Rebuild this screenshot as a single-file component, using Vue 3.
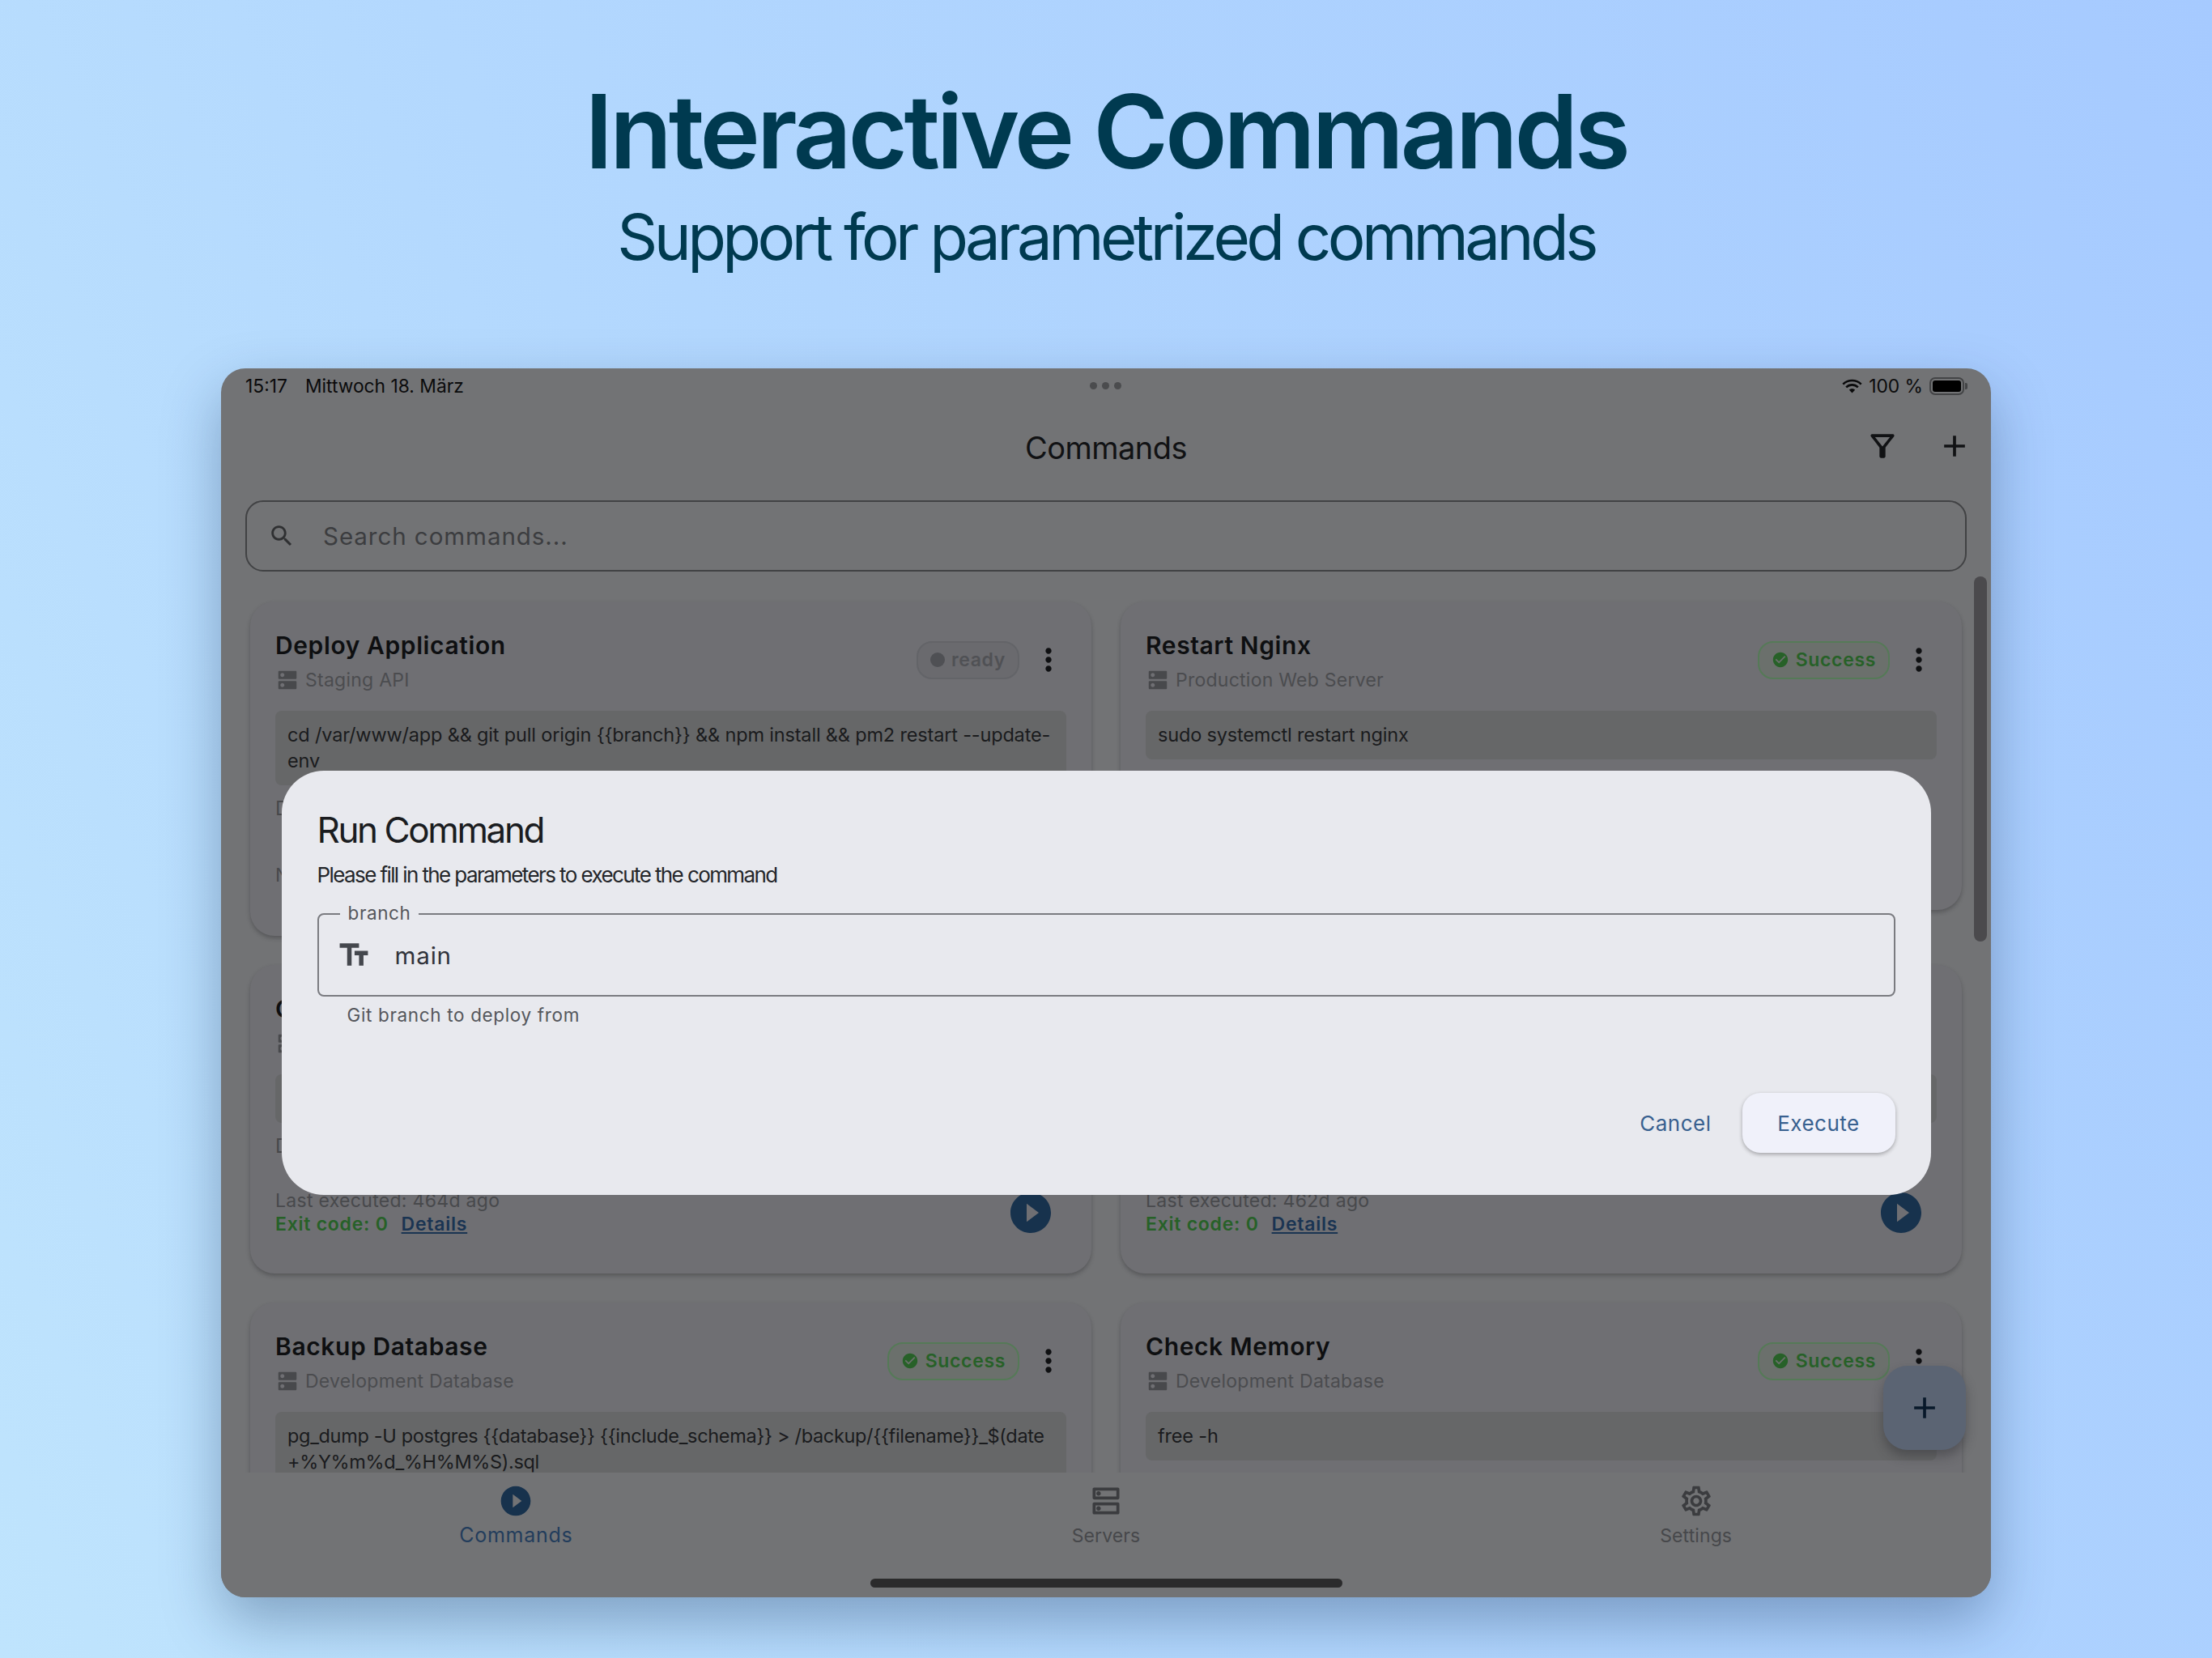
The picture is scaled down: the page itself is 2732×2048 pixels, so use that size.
<template>
  <div class="page">
    <header class="head">
      <h1>Interactive Commands</h1>
      <p>Support for parametrized commands</p>
    </header>

    <div class="device">
      <!-- status bar -->
      <div class="status">
        <div class="status-left"><span>15:17</span><span>Mittwoch 18. März</span></div>
        <div class="status-dots"><i></i><i></i><i></i></div>
        <div class="status-right">
          <svg width="25" height="18" viewBox="0 0 25 18" fill="none" stroke="#0b0b0c" stroke-width="2.6">
            <path d="M1.3 6.6a16 16 0 0 1 22.4 0" />
            <path d="M5.2 10.4a10.4 10.4 0 0 1 14.6 0" />
            <path d="M8.8 13.6a5.2 5.2 0 0 1 7.4 0L12.5 17.4z" fill="#0b0b0c" stroke="none" />
          </svg>
          <span>100 %</span>
          <div class="battery"><div></div></div>
        </div>
      </div>

      <!-- app bar -->
      <div class="appbar">
        <div class="appbar-title">Commands</div>
        <div class="appbar-actions">
          <svg class="ic44" viewBox="0 0 24 24" fill="#111214"><path :d="icons.filter" /></svg>
          <svg class="ic44" viewBox="0 0 24 24" fill="#111214"><path :d="icons.add" /></svg>
        </div>
      </div>

      <div class="search">
        <svg class="search-ic" viewBox="0 0 24 24" fill="#2f3032"><path :d="icons.search" /></svg>
        <span>Search commands...</span>
      </div>

      <main class="list">
        <div class="grid">
          <article v-for="c in cards" :key="c.title" class="card">
            <div class="card-top">
              <div class="card-names">
                <div class="card-title">{{ c.title }}</div>
                <div class="card-server">
                  <svg class="ic30" viewBox="0 0 24 24" fill="#48494c"><path :d="icons.dns" /></svg>
                  <span>{{ c.server }}</span>
                </div>
              </div>
              <div class="chip" :class="{ ok: c.ok }">
                <svg v-if="c.ok" class="ic22" viewBox="0 0 24 24" fill="#276128"><path :d="icons.check" /></svg>
                <i v-else class="chip-dot"></i>
                <span>{{ c.ok ? 'Success' : 'ready' }}</span>
              </div>
              <svg class="ic44 menu" viewBox="0 0 24 24" fill="#0f1012"><path :d="icons.more" /></svg>
            </div>
            <div class="code" :class="{ tight: c.tight }">{{ c.code }}</div>
            <div class="desc">{{ c.desc }}</div>
            <div class="foot">
              <div class="foot-text">
                <div v-if="c.last" class="last">Last executed: {{ c.last }} ago</div>
                <div v-else class="last">Never executed</div>
                <div v-if="c.last" class="exit">
                  <span>Exit code: 0</span><a>Details</a>
                </div>
              </div>
              <svg class="play" viewBox="0 0 24 24" fill="#17324d"><path :d="icons.play" /></svg>
            </div>
          </article>
        </div>
      </main>

      <nav class="nav">
        <div class="tab active">
          <svg class="ic44" viewBox="0 0 24 24" fill="#17324d"><path :d="icons.play" /></svg>
          <span>Commands</span>
        </div>
        <div class="tab">
          <svg class="ic44" viewBox="0 0 24 24" fill="#3b3c3f"><path :d="icons.dnsOutline" /></svg>
          <span>Servers</span>
        </div>
        <div class="tab">
          <svg class="ic44" viewBox="0 0 24 24" fill="#3b3c3f"><path :d="icons.settings" /></svg>
          <span>Settings</span>
        </div>
      </nav>
      <div class="home"></div>

      <div class="scrollbar"></div>
      <div class="fab">
        <svg class="ic44" viewBox="0 0 24 24" fill="#08182a"><path :d="icons.add" /></svg>
      </div>

      <!-- dialog -->
      <div class="overlay">
        <div class="dialog">
          <h2>Run Command</h2>
          <p class="dialog-sub">Please fill in the parameters to execute the command</p>
          <div class="field">
            <span class="field-label">branch</span>
            <svg class="ic44 field-ic" viewBox="0 0 24 24" fill="#44474d"><path :d="icons.text" /></svg>
            <span class="field-value">main</span>
          </div>
          <div class="helper">Git branch to deploy from</div>
          <div class="actions">
            <button class="btn-text">Cancel</button>
            <button class="btn-fill">Execute</button>
          </div>
        </div>
      </div>
    </div>
  </div>
</template>

<script setup>
const icons = {
  filter: 'M7 6h10l-5.01 6.3L7 6zm-2.75-.39C6.27 8.2 10 13 10 13v6c0 .55.45 1 1 1h2c.55 0 1-.45 1-1v-6s3.72-4.8 5.75-7.39c.51-.66.04-1.61-.79-1.61H5.04c-.83 0-1.3.95-.79 1.61z',
  add: 'M19 13h-6v6h-2v-6H5v-2h6V5h2v6h6v2z',
  search: 'M15.5 14h-.79l-.28-.27C15.41 12.59 16 11.11 16 9.5 16 5.91 13.09 3 9.5 3S3 5.91 3 9.5 5.91 16 9.5 16c1.61 0 3.09-.59 4.23-1.57l.27.28v.79l5 4.99L20.49 19l-4.99-5zm-6 0C7.01 14 5 11.99 5 9.5S7.01 5 9.5 5 14 7.01 14 9.5 11.99 14 9.5 14z',
  dns: 'M20 13H4c-.55 0-1 .45-1 1v6c0 .55.45 1 1 1h16c.55 0 1-.45 1-1v-6c0-.55-.45-1-1-1zM7 19c-1.1 0-2-.9-2-2s.9-2 2-2 2 .9 2 2-.9 2-2 2zM20 3H4c-.55 0-1 .45-1 1v6c0 .55.45 1 1 1h16c.55 0 1-.45 1-1V4c0-.55-.45-1-1-1zM7 9c-1.1 0-2-.9-2-2s.9-2 2-2 2 .9 2 2-.9 2-2 2z',
  dnsOutline: 'M19 15v4H5v-4h14m1-2H4c-.55 0-1 .45-1 1v6c0 .55.45 1 1 1h16c.55 0 1-.45 1-1v-6c0-.55-.45-1-1-1zM7 18.5c-.82 0-1.5-.67-1.5-1.5s.68-1.5 1.5-1.5 1.5.67 1.5 1.5-.67 1.5-1.5 1.5zM19 5v4H5V5h14m1-2H4c-.55 0-1 .45-1 1v6c0 .55.45 1 1 1h16c.55 0 1-.45 1-1V4c0-.55-.45-1-1-1zM7 8.5c-.82 0-1.5-.67-1.5-1.5S6.18 5.5 7 5.5s1.5.68 1.5 1.5S7.83 8.5 7 8.5z',
  settings: 'M19.43 12.98c.04-.32.07-.64.07-.98 0-.34-.03-.66-.07-.98l2.11-1.65c.19-.15.24-.42.12-.64l-2-3.46c-.09-.16-.26-.25-.44-.25-.06 0-.12.01-.17.03l-2.49 1c-.52-.4-1.08-.73-1.69-.98l-.38-2.65C14.46 2.18 14.25 2 14 2h-4c-.25 0-.46.18-.49.42l-.38 2.65c-.61.25-1.17.59-1.69.98l-2.49-1c-.06-.02-.12-.03-.18-.03-.17 0-.34.09-.43.25l-2 3.46c-.13.22-.07.49.12.64l2.11 1.65c-.04.32-.07.65-.07.98 0 .33.03.66.07.98l-2.11 1.65c-.19.15-.24.42-.12.64l2 3.46c.09.16.26.25.44.25.06 0 .12-.01.17-.03l2.49-1c.52.4 1.08.73 1.69.98l.38 2.65c.03.24.24.42.49.42h4c.25 0 .46-.18.49-.42l.38-2.65c.61-.25 1.17-.59 1.69-.98l2.49 1c.06.02.12.03.18.03.17 0 .34-.09.43-.25l2-3.46c.12-.22.07-.49-.12-.64l-2.11-1.65zm-1.98-1.71c.04.31.05.52.05.73 0 .21-.02.43-.05.73l-.14 1.13.89.7 1.08.84-.7 1.21-1.27-.51-1.04-.42-.9.68c-.43.32-.84.56-1.25.73l-1.06.43-.16 1.13-.2 1.35h-1.4l-.19-1.35-.16-1.13-1.06-.43c-.43-.18-.83-.41-1.23-.71l-.91-.7-1.06.43-1.27.51-.7-1.21 1.08-.84.89-.7-.14-1.13c-.03-.31-.05-.54-.05-.74s.02-.43.05-.73l.14-1.13-.89-.7-1.08-.84.7-1.21 1.27.51 1.04.42.9-.68c.43-.32.84-.56 1.25-.73l1.06-.43.16-1.13.2-1.35h1.39l.19 1.35.16 1.13 1.06.43c.43.18.83.41 1.23.71l.91.7 1.06-.43 1.27-.51.7 1.21-1.07.85-.89.7.14 1.13zM12 8c-2.21 0-4 1.79-4 4s1.79 4 4 4 4-1.79 4-4-1.79-4-4-4zm0 6c-1.1 0-2-.9-2-2s.9-2 2-2 2 .9 2 2-.9 2-2 2z',
  play: 'M12 2C6.48 2 2 6.48 2 12s4.48 10 10 10 10-4.48 10-10S17.52 2 12 2zm-2 14.5v-9l6 4.5-6 4.5z',
  check: 'M12 2C6.48 2 2 6.48 2 12s4.48 10 10 10 10-4.48 10-10S17.52 2 12 2zm-2 15l-5-5 1.41-1.41L10 14.17l7.59-7.59L19 8l-9 9z',
  more: 'M12 8c1.1 0 2-.9 2-2s-.9-2-2-2-2 .9-2 2 .9 2 2 2zm0 2c-1.1 0-2 .9-2 2s.9 2 2 2 2-.9 2-2-.9-2-2-2zm0 6c-1.1 0-2 .9-2 2s.9 2 2 2 2-.9 2-2-.9-2-2-2z',
  text: 'M2.5 4v3h5v12h3V7h5V4h-13zm19 5h-9v3h3v7h3v-7h3V9z'
}

const cards = [
  {
    title: 'Deploy Application',
    server: 'Staging API',
    ok: false,
    code: 'cd /var/www/app && git pull origin {{branch}} && npm install && pm2 restart --update-env',
    desc: 'Deploy latest version',
    last: ''
  },
  {
    title: 'Restart Nginx',
    server: 'Production Web Server',
    ok: true,
    code: 'sudo systemctl restart nginx',
    desc: 'Restart the web server',
    last: '465d'
  },
  {
    title: 'Check Disk Usage',
    server: 'Production Web Server',
    ok: true,
    code: 'df -h',
    desc: 'Disk usage overview',
    last: '464d'
  },
  {
    title: 'View Logs',
    server: 'Production Web Server',
    ok: true,
    code: 'tail -n 100 /var/log/nginx/error.log',
    desc: 'Display recent log lines',
    last: '462d'
  },
  {
    title: 'Backup Database',
    server: 'Development Database',
    ok: true,
    tight: true,
    code: 'pg_dump -U postgres {{database}} {{include_schema}} > /backup/{{filename}}_$(date +%Y%m%d_%H%M%S).sql',
    desc: 'Dump the database',
    last: '460d'
  },
  {
    title: 'Check Memory',
    server: 'Development Database',
    ok: true,
    code: 'free -h',
    desc: 'Show memory usage',
    last: '460d'
  }
]
</script>

<style scoped>
.page {
  width: 2732px;
  height: 2048px;
  overflow: hidden;
  background: linear-gradient(65deg, #bfe4fd 0%, #b3d8fe 40%, #a6caff 100%);
  font-family: Inter, "Noto Sans", sans-serif;
}

.head {
  text-align: center;
  color: #003a50;
  padding-top: 89px;
  height: 455px;
  box-sizing: border-box;
}
.head h1 {
  margin: 0;
  font-size: 126px;
  line-height: 146px;
  font-weight: 620;
  letter-spacing: -4.3px;
}
.head p {
  margin: 8px 0 0;
  font-size: 78px;
  line-height: 100px;
  font-weight: 400;
  letter-spacing: -4.6px;
}

.device {
  position: relative;
  width: 2186px;
  height: 1518px;
  margin-left: 273px;
  border-radius: 30px;
  overflow: hidden;
  background: #727375;
  display: flex;
  flex-direction: column;
  box-shadow: 0 30px 70px rgba(20, 50, 90, 0.35);
}

.status {
  height: 43px;
  flex: none;
  padding: 0 30px;
  display: flex;
  align-items: center;
  justify-content: space-between;
  font-size: 22.8px;
  color: #0b0b0c;
  position: relative;
}
.status-left {
  display: flex;
  gap: 22px;
}
.status-dots {
  position: absolute;
  left: 1073px;
  top: 17px;
  display: flex;
  gap: 6px;
}
.status-dots i {
  width: 9px;
  height: 9px;
  border-radius: 50%;
  background: #4b4c4e;
}
.status-right {
  display: flex;
  align-items: center;
  gap: 8px;
}
.battery {
  width: 43px;
  height: 22px;
  border: 2px solid #434446;
  border-radius: 7px;
  box-sizing: border-box;
  padding: 2px;
  position: relative;
  margin-right: 3px;
}
.battery div {
  height: 100%;
  background: #000;
  border-radius: 3px;
}
.battery::after {
  content: "";
  position: absolute;
  right: -6px;
  top: 5px;
  width: 3px;
  height: 8px;
  background: #434446;
  border-radius: 0 2px 2px 0;
}

.appbar {
  height: 120px;
  flex: none;
  position: relative;
  box-sizing: border-box;
  padding-bottom: 10px;
  display: flex;
  align-items: center;
  justify-content: center;
}
.appbar-title {
  font-size: 38px;
  color: #111214;
  letter-spacing: -0.5px;
}
.appbar-actions {
  position: absolute;
  right: 23px;
  top: 31px;
  display: flex;
  gap: 45px;
}

.ic44 {
  width: 44px;
  height: 44px;
  flex: none;
}
.ic30 {
  width: 30px;
  height: 30px;
  flex: none;
}
.ic22 {
  width: 22px;
  height: 22px;
  flex: none;
}

.search {
  flex: none;
  height: 88px;
  margin: 0 30px;
  box-sizing: border-box;
  border: 2px solid #414244;
  border-radius: 22px;
  display: flex;
  align-items: center;
  padding-left: 26px;
  font-size: 29.6px;
  color: #3c3d40;
  letter-spacing: 0.9px;
}
.search-ic {
  width: 34px;
  height: 34px;
  margin-right: 34px;
}

.list {
  flex: 1;
  min-height: 0;
  overflow: hidden;
  padding: 37px 34px 0 36px;
}
.grid {
  display: grid;
  grid-template-columns: 1039px 1039px;
  column-gap: 36px;
  row-gap: 36px;
  align-items: start;
}
.card {
  background: #6f6f73;
  border-radius: 30px;
  padding: 32px 31px 45px 31px;
  box-shadow: 0 3px 5px rgba(40, 40, 44, 0.35);
}
.card-top {
  display: flex;
  align-items: center;
}
.card-names {
  flex: 1;
  min-width: 0;
}
.card-title {
  font-size: 30px;
  line-height: 44px;
  font-weight: 600;
  color: #0e0f11;
  letter-spacing: 0.6px;
}
.card-server {
  display: flex;
  align-items: center;
  gap: 7px;
  margin-top: 6px;
  height: 30px;
  font-size: 23px;
  color: #4b4c4f;
  letter-spacing: 0.25px;
}
.chip {
  height: 47px;
  box-sizing: border-box;
  border: 2px solid #636468;
  background: #6a6a6e;
  border-radius: 19px;
  padding: 0 15px;
  display: flex;
  align-items: center;
  gap: 8px;
  font-size: 23px;
  font-weight: 600;
  color: #505155;
  letter-spacing: 0.65px;
}
.chip.ok {
  border-color: #557a57;
  background: #6b706c;
  color: #276128;
}
.chip-dot {
  width: 18px;
  height: 18px;
  border-radius: 50%;
  background: #4f5054;
}
.menu {
  margin-left: 14px;
}
.code {
  margin-top: 23px;
  background: #666768;
  border-radius: 8px;
  padding: 14px 15px;
  font-size: 23.5px;
  line-height: 32px;
  color: #1a1b1d;
  letter-spacing: -0.17px;
}
.code.tight {
  letter-spacing: -0.33px;
}
.desc {
  margin-top: 14px;
  font-size: 24px;
  line-height: 30px;
  color: #47484b;
}
.foot {
  margin-top: 37px;
  min-height: 58px;
  display: flex;
  align-items: center;
  justify-content: space-between;
}
.last {
  font-size: 23px;
  line-height: 29px;
  color: #48494c;
  letter-spacing: 0.3px;
}
.exit {
  font-size: 23px;
  line-height: 29px;
  font-weight: 600;
  color: #276128;
  letter-spacing: 0.75px;
  display: flex;
  gap: 16px;
}
.exit a {
  color: #1a3452;
  text-decoration: underline;
}
.play {
  width: 60px;
  height: 60px;
  margin-right: 14px;
  flex: none;
}

.nav {
  flex: none;
  height: 154px;
  display: flex;
  background: #727375;
  position: relative;
  box-sizing: border-box;
  padding-top: 13px;
}
.tab {
  flex: 1;
  display: flex;
  flex-direction: column;
  align-items: center;
  font-size: 23px;
  color: #47484b;
  letter-spacing: 0.1px;
  line-height: 30px;
}
.tab span {
  margin-top: 6px;
}
.tab.active {
  color: #233d5c;
  font-size: 25px;
  letter-spacing: 0.7px;
}
.tab.active span {
  margin-top: 5px;
}
.home {
  position: absolute;
  left: 802px;
  width: 583px;
  top: 1495px;
  height: 11px;
  border-radius: 6px;
  background: #2b2b2c;
}
.scrollbar {
  position: absolute;
  left: 2165px;
  top: 257px;
  width: 16px;
  height: 451px;
  border-radius: 8px;
  background: #4b4a4d;
}
.fab {
  position: absolute;
  left: 2053px;
  top: 1232px;
  width: 102px;
  height: 104px;
  border-radius: 30px;
  background: #5b6473;
  box-shadow: 0 8px 14px rgba(40, 40, 44, 0.4);
  display: flex;
  align-items: center;
  justify-content: center;
}

.overlay {
  position: absolute;
  inset: 0;
  display: flex;
  align-items: center;
  justify-content: center;
}
.dialog {
  width: 2037px;
  height: 524px;
  box-sizing: border-box;
  background: #e8e9ee;
  border-radius: 52px;
  padding: 48px 44px 0 44px;
  color: #1a1c20;
}
.dialog h2 {
  margin: 0;
  font-size: 44px;
  line-height: 50px;
  font-weight: 400;
  letter-spacing: -2.4px;
}
.dialog-sub {
  margin: 14px 0 0;
  font-size: 26px;
  line-height: 34px;
  letter-spacing: -1.6px;
  color: #24262a;
}
.field {
  position: relative;
  margin-top: 30px;
  height: 103px;
  box-sizing: border-box;
  border: 2px solid #7a7b80;
  border-radius: 8px;
  display: flex;
  align-items: center;
  padding-left: 21px;
}
.field-label {
  position: absolute;
  left: 26px;
  top: -15px;
  padding: 0 10px;
  background: #e8e9ee;
  font-size: 22.5px;
  line-height: 26px;
  color: #55575c;
  letter-spacing: 0.6px;
}
.field-value {
  margin-left: 29px;
  font-size: 29.6px;
  color: #30323a;
  letter-spacing: 0.8px;
}
.helper {
  margin: 10px 0 0 37px;
  font-size: 22.5px;
  line-height: 26px;
  color: #55575c;
  letter-spacing: 0.65px;
}
.actions {
  display: flex;
  justify-content: flex-end;
  align-items: center;
  gap: 38px;
  margin-top: 83px;
}
.actions button {
  font-family: inherit;
  font-size: 26px;
  color: #38608f;
  border: 0;
  background: none;
  padding: 0;
  letter-spacing: 0.5px;
}
.actions .btn-fill {
  width: 189px;
  height: 74px;
  border-radius: 22px;
  background: #f0f1fa;
  box-shadow: 0 2px 5px rgba(0, 0, 0, 0.3);
}
</style>

<style>
html,
body {
  margin: 0;
}
</style>
